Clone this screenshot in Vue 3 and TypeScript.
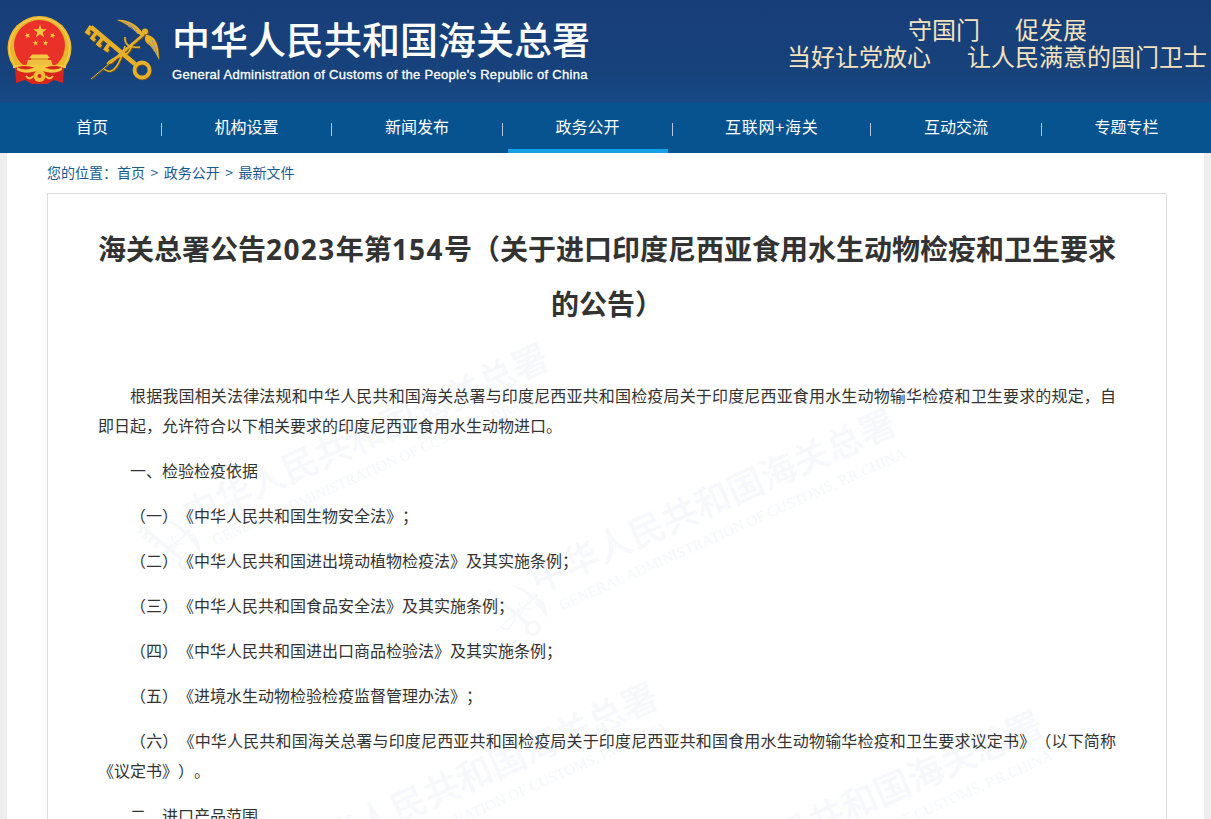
<script setup lang="ts">
interface NavItem {
  label: string
  wide?: boolean
  short?: boolean
  active?: boolean
}

interface Mark {
  x: number
  y: number
}

const navItems: NavItem[] = [
  { label: '首页', short: true },
  { label: '机构设置' },
  { label: '新闻发布' },
  { label: '政务公开', active: true },
  { label: '互联网+海关', wide: true },
  { label: '互动交流' },
  { label: '专题专栏' },
]

const paragraphs: string[] = [
  '根据我国相关法律法规和中华人民共和国海关总署与印度尼西亚共和国检疫局关于印度尼西亚食用水生动物输华检疫和卫生要求的规定，自即日起，允许符合以下相关要求的印度尼西亚食用水生动物进口。',
  '一、检验检疫依据',
  '（一）《中华人民共和国生物安全法》；',
  '（二）《中华人民共和国进出境动植物检疫法》及其实施条例；',
  '（三）《中华人民共和国食品安全法》及其实施条例；',
  '（四）《中华人民共和国进出口商品检验法》及其实施条例；',
  '（五）《进境水生动物检验检疫监督管理办法》；',
  '（六）《中华人民共和国海关总署与印度尼西亚共和国检疫局关于印度尼西亚共和国食用水生动物输华检疫和卫生要求议定书》（以下简称《议定书》）。',
  '二、进口产品范围',
]

// watermark positions, relative to the article box
const marks: Mark[] = [
  { x: 86, y: 323 },
  { x: 433, y: 388 },
  { x: 195, y: 662 },
  { x: 580, y: 690 },
]

function star(cx: number, cy: number, r: number, turn = 0): string {
  const pts: string[] = []
  for (let i = 0; i < 10; i++) {
    const rad = i % 2 === 0 ? r : r * 0.4
    const a = ((-90 + turn + i * 36) * Math.PI) / 180
    pts.push(`${(cx + rad * Math.cos(a)).toFixed(2)},${(cy + rad * Math.sin(a)).toFixed(2)}`)
  }
  return pts.join(' ')
}

const stars = [
  star(33, 15.5, 7),
  star(20.5, 19.5, 3, -20),
  star(45.5, 19.5, 3, 20),
  star(28.5, 27, 3, -10),
  star(38.5, 27, 3, 10),
]
</script>

<template>
  <div class="page">
    <svg class="defs" width="0" height="0" aria-hidden="true">
      <defs>
        <symbol id="customs-key" viewBox="0 0 80 75">
          <path class="key-line" stroke-width="4.500" d="M11 12 L55 49" />
          <path class="key-line" stroke-width="3.500" d="M11 11 L7 17 L10 19 M17 16.500 L12 23 L15 25.500 M23.500 22 L18 29 L21 31.500 M30 27.500 L25.500 34 L28.500 36" />
          <circle class="key-line" stroke-width="3.800" cx="62" cy="55" r="7.500" />
          <path class="key-line" stroke-width="1" d="M11 64 L30 48" />
          <path class="key-line" stroke-width="2.500" d="M30 48 L64 19" />
          <circle class="key-fill" cx="65" cy="16.500" r="3" />
          <path class="key-fill" d="M63 18 C56 9 47 4 37 5 C43 7 48 11 52 12.500 C55 16 58 19 62 21 Z" />
          <path class="key-fill" d="M66 20 C74 20 79 27 79 45 C76 38 72 32 68 29 C65 27 64 24 66 20 Z" />
          <path class="key-line" stroke-width="1.600" d="M27 49 C36 37 47 46 52 30 M24 54 C34 62 40 47 45 31 M45 22 C44 30 50 33 60 32" />
        </symbol>
      </defs>
    </svg>

    <header class="top">
      <svg class="emblem" viewBox="0 0 65 70" width="65" height="70">
        <circle cx="32.500" cy="32" r="32" fill="#e9b62c" />
        <circle cx="32.500" cy="32" r="30" fill="none" stroke="#f7d667" stroke-width="1" />
        <circle cx="32.500" cy="29.500" r="25.500" fill="#e9312a" />
        <polygon v-for="(pts, i) in stars" :key="i" :points="pts" fill="#f4c93f" />
        <path d="M25 38.500 H40 L43 42 H22 Z" fill="#f4c93f" />
        <rect x="24" y="42" width="17" height="2" fill="#d8a02a" />
        <path d="M21 44 H44 L46 50 H19 Z" fill="#efc040" />
        <rect x="6" y="49" width="53" height="3" fill="#f4c93f" />
        <path d="M8 52 C18 48 26 51 32.500 54 C39 51 47 48 57 52 L56 67 L47 64 L40 68 H25 L18 64 L9 67 Z" fill="#d8261f" />
        <path d="M10 51 C20 57 26 50 32.500 51 C39 50 45 57 55 51 L55 54 C45 60 38 54 32.500 55 C27 54 20 60 10 54 Z" fill="#f4c93f" />
        <circle cx="32.500" cy="60" r="6" fill="#f0bf35" />
        <circle cx="32.500" cy="60" r="2" fill="#d8261f" />
        <path d="M19 60 C22 64 25 62 26 60 M46 60 C43 64 40 62 39 60" fill="none" stroke="#f4c93f" stroke-width="2" />
      </svg>

      <svg class="key-logo" viewBox="0 0 80 75" width="80" height="75">
        <use class="key-shade" href="#customs-key" x="0.800" y="0.800" />
        <use href="#customs-key" />
        <path class="wing-shade" d="M44 7 C49 9 53 11 57 15 M48 11 C51 13 55 15 58 19 M72 25 C74 30 76 35 77 40 M69 27 C71 30 73 33 74 36" />
      </svg>

      <div class="brand">
        <div class="brand-cn">中华人民共和国海关总署</div>
        <div class="brand-en">General Administration of Customs of the People's Republic of China</div>
      </div>

      <div class="slogan">
        <div class="slogan-row first"><span>守国门</span><span>促发展</span></div>
        <div class="slogan-row"><span>当好让党放心</span><span>让人民满意的国门卫士</span></div>
      </div>
    </header>

    <nav class="nav">
      <template v-for="(item, i) in navItems" :key="item.label">
        <span v-if="i > 0" class="nav-sep"></span>
        <a class="nav-item" :class="{ active: item.active, wide: item.wide, short: item.short }">{{ item.label }}</a>
      </template>
    </nav>

    <main class="main">
      <div class="crumbs">
        <span>您的位置：</span><span>首页</span><span class="gt">&gt;</span><span>政务公开</span><span class="gt">&gt;</span><span>最新文件</span>
      </div>

      <article class="article">
        <div v-for="(m, i) in marks" :key="i" class="mark" :style="{ left: m.x + 'px', top: m.y + 'px' }">
          <svg class="mark-key" viewBox="0 0 80 75" width="67" height="63">
            <use href="#customs-key" />
          </svg>
          <div class="mark-text">
            <div class="mark-cn">中华人民共和国海关总署</div>
            <div class="mark-en">GENERAL ADMINISTRATION OF CUSTOMS, P.R.CHINA</div>
          </div>
        </div>

        <div class="article-body">
          <h1 class="title">海关总署公告<span class="num">2023</span>年第<span class="num">154</span>号（关于进口印度尼西亚食用水生动物检疫和卫生要求的公告）</h1>
          <p v-for="(text, i) in paragraphs" :key="i" class="para">{{ text }}</p>
        </div>
      </article>
    </main>
  </div>
</template>

<style>
html,
body {
  margin: 0;
  overflow: hidden;
}
</style>

<style scoped>
.page {
  height: 100vh;
  display: flex;
  flex-direction: column;
  overflow: hidden;
  background: #eeeeee;
  font-family: "Noto Sans CJK SC", sans-serif;
  text-spacing-trim: space-all;
}

.defs {
  position: absolute;
}

.key-line {
  fill: none;
  stroke: currentColor;
}

.key-fill {
  fill: currentColor;
}

.top {
  flex: none;
  height: 103px;
  display: flex;
  align-items: flex-start;
  background: linear-gradient(180deg, #183e78 0%, #17427c 70%, #164a86 100%);
}

.emblem {
  flex: none;
  margin: 16px 0 0 7px;
}

.key-logo {
  flex: none;
  margin: 15px 0 0 8px;
  color: #e6b02a;
}

.key-shade {
  color: #7d5410;
}

.wing-shade {
  fill: none;
  stroke: #8e979c;
  stroke-width: 1;
}

.brand {
  flex: none;
  margin: 15px 0 0 12px;
  color: #ffffff;
}

.brand-cn {
  font-size: 38px;
  line-height: 46px;
  font-weight: 500;
  white-space: nowrap;
}

.brand-en {
  margin-top: 6px;
  font-family: "Liberation Sans", sans-serif;
  font-size: 13px;
  line-height: 16px;
  letter-spacing: 0.29px;
  -webkit-text-stroke: 0.3px #ffffff;
  white-space: nowrap;
}

.slogan {
  flex: none;
  margin: 15px 4px 0 auto;
  color: #f6e3bd;
  font-size: 24px;
  line-height: 27px;
}

.slogan-row {
  display: flex;
  justify-content: center;
  gap: 36px;
}

.slogan-row.first {
  gap: 35px;
  padding-left: 1px;
}

.nav {
  flex: none;
  height: 50px;
  display: flex;
  align-items: center;
  padding-left: 28px;
  background: #07538f;
}

.nav-item {
  flex: none;
  box-sizing: border-box;
  width: 160px;
  height: 50px;
  line-height: 47px;
  text-align: center;
  color: #ffffff;
  font-size: 16px;
}

.nav-item.short {
  width: 128px;
}

.nav-item.wide {
  width: 187.5px;
  letter-spacing: 0.8px;
}

.nav-item.active {
  border-bottom: 4px solid #14a0e6;
}

.nav-sep {
  flex: none;
  width: 1px;
  height: 13px;
  margin: 3px 4.75px 0;
  background: #b4c6da;
}

.main {
  flex: 1;
  min-height: 0;
  margin: 0 7px;
  padding: 0 37px 0 40px;
  background: #ffffff;
  overflow: hidden;
}

.crumbs {
  height: 40px;
  line-height: 39px;
  font-size: 14px;
  color: #1a5a90;
  white-space: nowrap;
}

.gt {
  margin: 0 5.5px;
}

.article {
  position: relative;
  border: 1px solid #dddddd;
  padding: 28px 50px 60px;
  overflow: hidden;
}

.article-body {
  position: relative;
}

.title {
  margin: 0 0 48px;
  font-family: "Open Sans", "Noto Sans CJK SC", sans-serif;
  font-size: 28px;
  line-height: 55px;
  font-weight: 700;
  text-align: center;
  color: #333333;
}

.num {
  letter-spacing: 1.4px;
}

.para {
  margin: 0 0 15px;
  font-size: 16px;
  line-height: 30px;
  text-indent: 32px;
  text-align: justify;
  color: #333333;
}

.mark {
  position: absolute;
  width: 0;
  height: 0;
  color: #f6f8fb;
}

.mark-key {
  position: absolute;
  left: 0;
  top: 0;
}

.mark-text {
  position: absolute;
  left: 42px;
  top: -20px;
  width: 460px;
  transform: rotate(-24deg);
  transform-origin: 0 0;
}

.mark-cn {
  font-size: 36px;
  line-height: 36px;
  font-weight: 500;
  white-space: nowrap;
}

.mark-en {
  margin: 10px 0 0 16px;
  font-family: "Liberation Serif", serif;
  font-size: 15px;
  line-height: 18px;
  white-space: nowrap;
}
</style>
